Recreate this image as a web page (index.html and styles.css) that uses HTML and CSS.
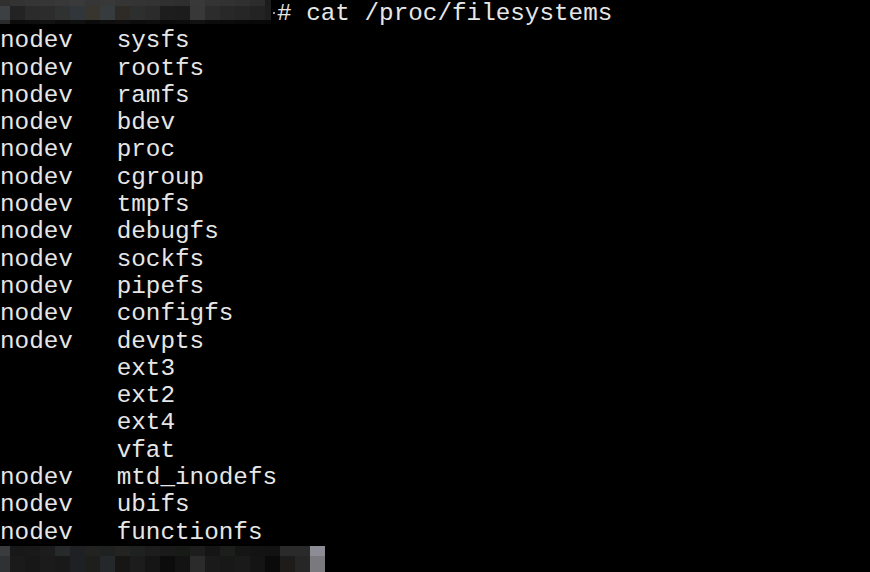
FILE: index.html
```html
<!DOCTYPE html>
<html>
<head>
<meta charset="utf-8">
<link rel="stylesheet" href="styles.css">
</head>
<body>
<div class="term">
<div class="line"><span class="mask-top"><span class="mt-r1"></span><span class="mt-r2"></span><span class="mt-r3"></span></span><span class="tick"></span># cat /proc/filesystems</div>
<div class="line">nodev	sysfs</div>
<div class="line">nodev	rootfs</div>
<div class="line">nodev	ramfs</div>
<div class="line">nodev	bdev</div>
<div class="line">nodev	proc</div>
<div class="line">nodev	cgroup</div>
<div class="line">nodev	tmpfs</div>
<div class="line">nodev	debugfs</div>
<div class="line">nodev	sockfs</div>
<div class="line">nodev	pipefs</div>
<div class="line">nodev	configfs</div>
<div class="line">nodev	devpts</div>
<div class="line">	ext3</div>
<div class="line">	ext2</div>
<div class="line">	ext4</div>
<div class="line">	vfat</div>
<div class="line">nodev	mtd_inodefs</div>
<div class="line">nodev	ubifs</div>
<div class="line">nodev	functionfs</div>
<div class="mask-bottom"><div class="mb-r1"></div><div class="mb-r2"></div></div>
</div>
</body>
</html>
```
FILE: styles.css
```css
html, body {
  margin: 0;
  padding: 0;
  background: #000;
  height: 100%;
  overflow: hidden;
}
.term {
  font-family: "Courier New", "Nimbus Mono PS", "Nimbus Mono L", "FreeMono", "Courier", "Liberation Mono", monospace;
  font-size: 24.3px;
  line-height: 27.3px;
  color: #e6e6e6;
}
.line {
  height: 27.3px;
  white-space: pre;
  tab-size: 8;
  -moz-tab-size: 8;
}
.mask-top {
  display: inline-flex;
  flex-direction: column;
  width: 271px;
  height: 24px;
  vertical-align: top;
}
.mt-r1 {
  height: 6px;
  background: linear-gradient(to right,
    #303030 0 10px, #333333 10px 25px, #353535 25px 40px, #363636 40px 55px,
    #383838 55px 70px, #3a3a3a 70px 85px, #363636 85px 100px, #383838 100px 115px,
    #353535 115px 130px, #343434 130px 145px, #333333 145px 160px, #303030 160px 175px,
    #2e2e2e 175px 190px, #393939 190px 205px, #343434 205px 220px, #323232 220px 235px,
    #303030 235px 250px, #2c2c2c 250px 265px, #1c1c1c 265px 271px);
}
.mt-r2 {
  height: 14px;
  background: linear-gradient(to right,
    #3c4043 0 10px, #232323 10px 25px, #2b2b2b 25px 40px, #2c2c2c 40px 55px,
    #303232 55px 70px, #30363a 70px 85px, #38352f 85px 100px, #363b3e 100px 115px,
    #2e2b26 115px 130px, #2d2f2e 130px 145px, #2b2b2b 145px 160px, #1d1d1d 160px 175px,
    #1c1c1c 175px 190px, #383838 190px 205px, #2c2c2c 205px 220px, #282828 220px 235px,
    #262626 235px 250px, #232323 250px 265px, #1e1e1e 265px 271px);
}
.mt-r3 {
  height: 4px;
  background: linear-gradient(to right,
    #2a2a2a 0 10px, #0c0c0c 10px 25px, #0e0e0e 25px 40px, #121212 40px 55px,
    #0d0d0d 55px 70px, #101010 70px 85px, #0b0b0b 85px 100px, #0e0e0e 100px 115px,
    #101010 115px 130px, #0c0c0c 130px 145px, #0e0e0e 145px 160px, #0a0a0a 160px 175px,
    #0d0d0d 175px 190px, #111111 190px 205px, #0c0c0c 205px 220px, #0b0b0b 220px 235px,
    #090909 235px 250px, #080808 250px 271px);
}
.tick {
  display: inline-block;
  width: 2px;
  height: 2px;
  margin: 12px 2px 0 2px;
  background: #8a9aa8;
  vertical-align: top;
}
.mask-bottom {
  width: 325px;
  height: 27px;
  display: flex;
  flex-direction: column;
}
.mb-r1 {
  height: 10px;
  background: linear-gradient(to right,
    #393b3d 0 10px, #181818 10px 25px, #191919 25px 40px, #1c1c1c 40px 55px,
    #262a2a 55px 70px, #1e2024 70px 85px, #222220 85px 100px, #1f2120 100px 115px,
    #232321 115px 130px, #1f2120 130px 145px, #1d1d1d 145px 160px, #1a1a1a 160px 175px,
    #181a18 175px 190px, #1d1d1d 190px 205px, #151515 205px 220px, #1c1e1c 220px 235px,
    #151515 235px 250px, #131313 250px 265px, #121212 265px 280px, #2a2a2a 280px 310px,
    #8c8c94 310px 325px);
}
.mb-r2 {
  height: 17px;
  background: linear-gradient(to right,
    #2f3132 0 10px, #1a1a1a 10px 25px, #171717 25px 40px, #1b1b1b 40px 55px,
    #191919 55px 70px, #1e2024 70px 85px, #1e1e1c 85px 100px, #25282b 100px 115px,
    #181614 115px 130px, #1c1c1c 130px 145px, #151515 145px 160px, #0c0c0c 160px 175px,
    #131313 175px 190px, #2b2b2b 190px 205px, #1a1a1a 205px 220px, #181818 220px 235px,
    #1a1a1a 235px 250px, #141414 250px 265px, #0a0a0a 265px 280px, #1e1c1a 280px 295px,
    #262626 295px 310px, #7a7a7e 310px 325px);
}
```
